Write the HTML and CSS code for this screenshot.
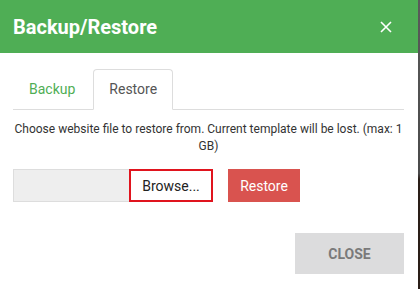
FILE: index.html
```html
<!DOCTYPE html>
<html>
    <head>
        <title>Backup/Restore</title>
        <link rel="stylesheet" href="styles.css">
    </head>
    <body>
        <div class="page">
            <div class="dialog">
                <div class="header">
                    <h1>Backup/Restore</h1>
                    <span class="close-x">
                        <svg width="12" height="12" viewBox="0 0 12 12"><path d="M1 1L11 11M11 1L1 11" stroke="#fff" stroke-width="1.6"/></svg>
                    </span>
                </div>
                <div class="body">
                    <div class="tabs">
                        <span class="tab">Backup</span>
                        <span class="tab active">Restore</span>
                    </div>
                    <p class="hint">Choose website file to restore from. Current template will be lost. (max: 1 GB)</p>
                    <div class="upload">
                        <div class="file">
                            <span class="browse">Browse...</span>
                        </div>
                        <span class="btn-restore">Restore</span>
                    </div>
                    <div class="footer">
                        <span class="btn-close">CLOSE</span>
                    </div>
                </div>
            </div>
            <div class="backdrop"></div>
        </div>
    </body>
</html>
```
FILE: styles.css
```css
html, body{
    margin: 0;
    height: 100%;
}
body{
    font-family: Roboto, "Liberation Sans", sans-serif;
    background: #fff;
}
.page{
    display: flex;
    height: 100%;
}
.dialog{
    width: 418px;
    display: flex;
    flex-direction: column;
}
.backdrop{
    flex: 1;
    background: linear-gradient(#5a5a5a 0, #4a4a4a 60%, #2a1e18 62%, #2a1e18 100%);
}
.header{
    height: 53px;
    background: #4fae55;
    display: flex;
    align-items: center;
    justify-content: space-between;
    padding: 0 26px 0 13px;
}
.header h1{
    margin: 0;
    color: #fff;
    font-size: 20px;
    font-weight: 700;
}
.close-x{
    display: flex;
}
.body{
    padding: 16px 14px 0 13px;
}
.tabs{
    display: flex;
    border-bottom: 1px solid #ddd;
    height: 40px;
}
.tab{
    padding: 0 15px;
    margin-right: 2px;
    font-size: 14px;
    color: #4fae55;
    line-height: 39px;
    border: 1px solid transparent;
    border-radius: 4px 4px 0 0;
    margin-bottom: -1px;
}
.tab.active{
    color: #555;
    border-color: #ddd;
    border-bottom-color: #fff;
    background: #fff;
}
.hint{
    margin: 11px 0 0;
    font-size: 12px;
    line-height: 17px;
    color: #333;
    text-align: center;
}
.upload{
    display: flex;
    margin-top: 14px;
    gap: 15px;
}
.file{
    width: 200px;
    height: 33px;
    box-sizing: border-box;
    background: #eee;
    border: 1px solid #ddd;
    display: flex;
    justify-content: flex-end;
}
.browse{
    width: 84px;
    box-sizing: border-box;
    margin: -1px -1px -1px 0;
    height: 33px;
    border: 2px solid #e0141e;
    background: #fff;
    font-size: 14px;
    color: #222;
    display: flex;
    align-items: center;
    justify-content: center;
}
.btn-restore{
    width: 72px;
    height: 33px;
    background: #d9534f;
    color: #fff;
    font-size: 14px;
    display: flex;
    align-items: center;
    justify-content: center;
}
.footer{
    display: flex;
    justify-content: flex-end;
    margin-top: 31px;
}
.btn-close{
    width: 109px;
    height: 41px;
    background: #dcdcdd;
    color: #7a7a7a;
    font-size: 14px;
    font-weight: 700;
    display: flex;
    align-items: center;
    justify-content: center;
}
```
